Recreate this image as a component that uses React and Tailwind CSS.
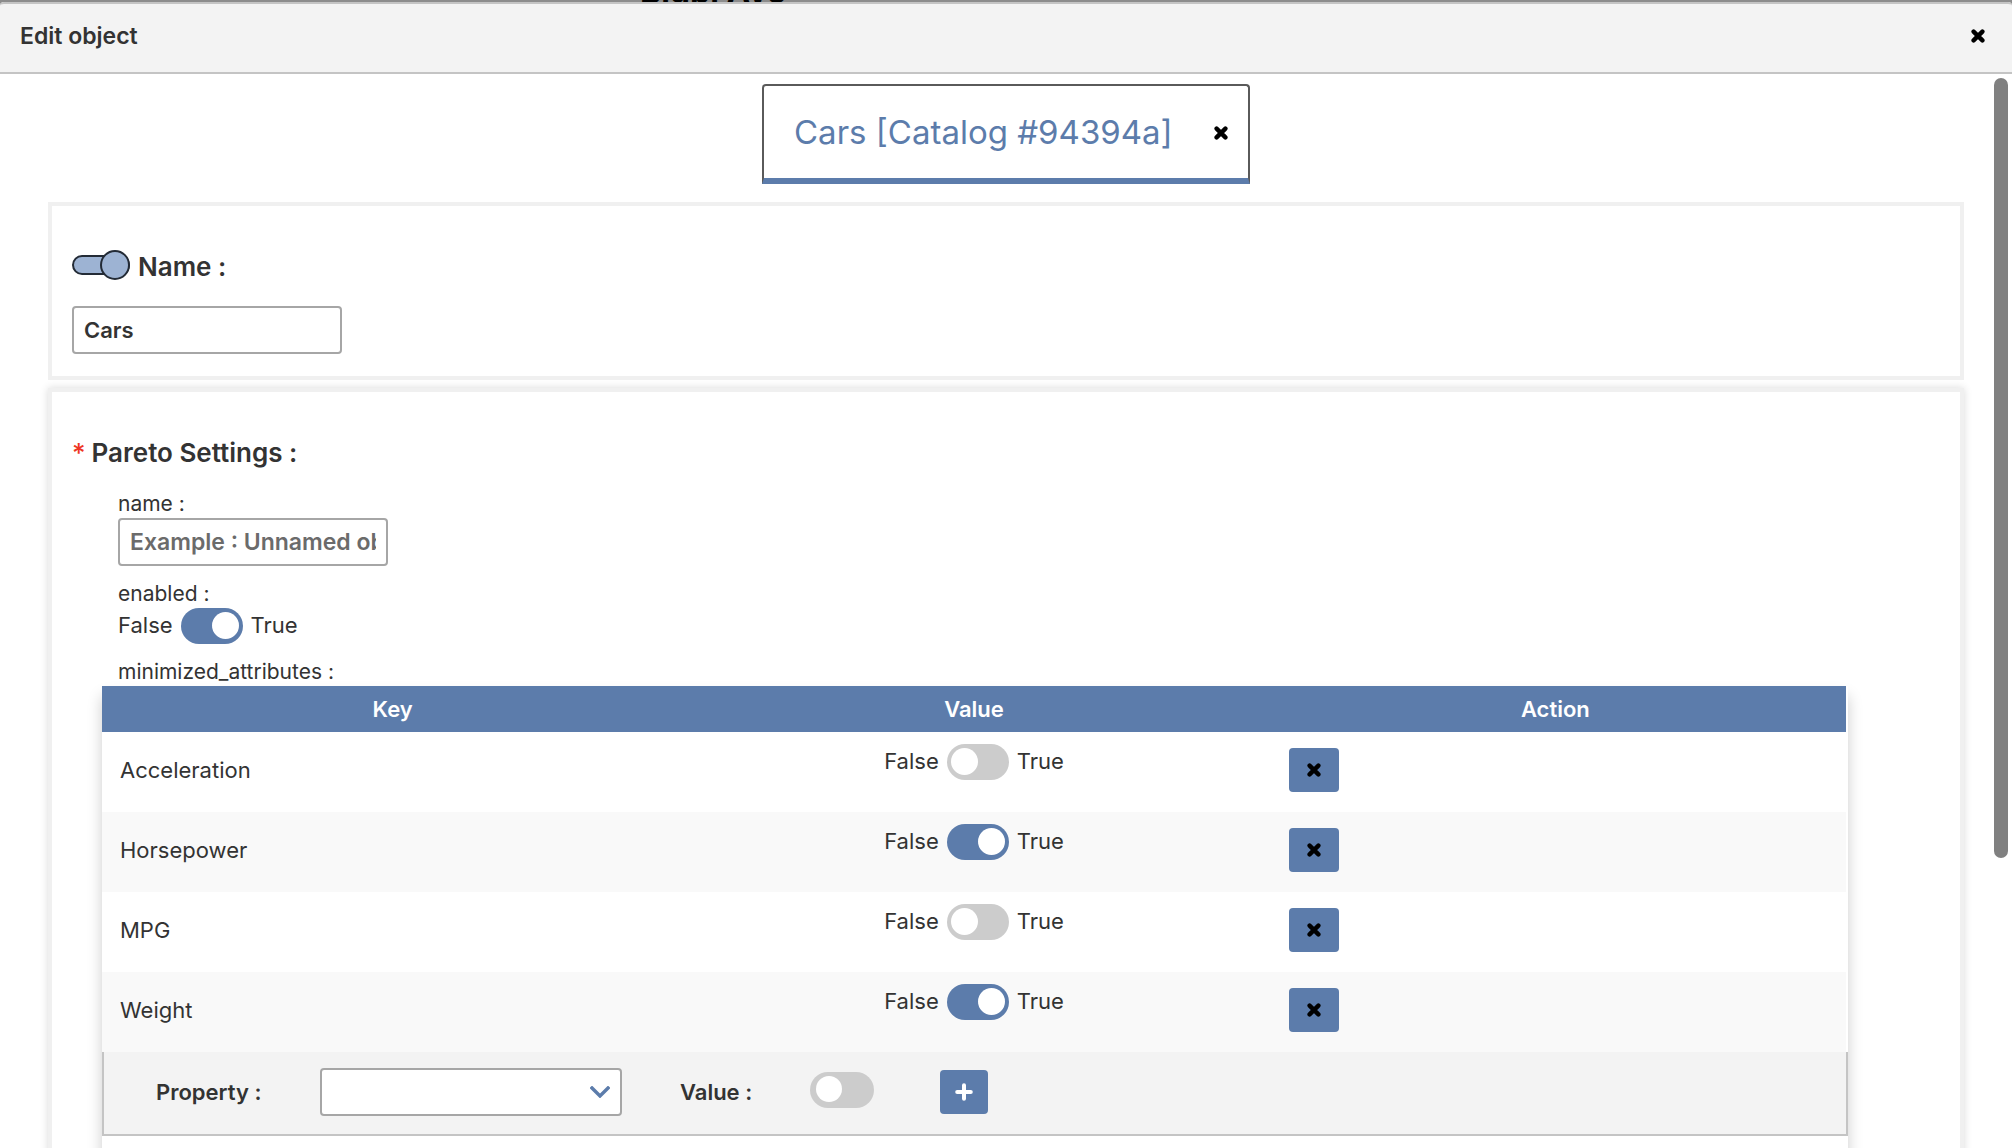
import { useState } from "react";

const ATTRIBUTES = [
  { name: "Acceleration", on: false },
  { name: "Horsepower", on: true },
  { name: "MPG", on: false },
  { name: "Weight", on: true },
];

function CrossIcon() {
  return (
    <svg className="size-[14px]" viewBox="0 0 14 14" aria-hidden="true">
      <path d="M2.6 2.6 11.4 11.4M11.4 2.6 2.6 11.4" stroke="#000" strokeWidth="4.4" strokeLinecap="round" />
    </svg>
  );
}

function Switch({ label, defaultOn = false, wide = false }) {
  const [on, setOn] = useState(defaultOn);
  return (
    <span className={wide ? "relative flex h-9 w-16 shrink-0" : "relative flex h-9 w-[62px] shrink-0"}>
      <input
        type="checkbox"
        role="switch"
        aria-label={label}
        checked={on}
        onChange={() => setOn(!on)}
        className="h-full w-full cursor-pointer appearance-none rounded-full bg-[#ccc] checked:bg-[#5c7cab]"
      />
      <span
        className={
          on
            ? "pointer-events-none absolute top-1 right-1 size-[27px] rounded-full bg-white"
            : wide
              ? "pointer-events-none absolute top-1 left-1.5 size-[26px] rounded-full bg-white"
              : "pointer-events-none absolute top-1 left-1 size-[27px] rounded-full bg-white"
        }
      />
    </span>
  );
}

function BooleanField({ label, defaultOn }) {
  return (
    <div className="flex h-9 gap-2 text-[22px] leading-[34px]">
      <span>False</span>
      <Switch label={label} defaultOn={defaultOn} />
      <span>True</span>
    </div>
  );
}

function SlimToggle({ label }) {
  const [on, setOn] = useState(true);
  return (
    <span className="relative flex h-[30px] w-[58px] items-center">
      <input
        type="checkbox"
        role="switch"
        aria-label={label}
        checked={on}
        onChange={() => setOn(!on)}
        className="h-5 w-full cursor-pointer appearance-none rounded-full border-2 border-[#232b36] bg-[#9db3d3]"
      />
      <span
        className={
          on
            ? "pointer-events-none absolute top-0 right-0 size-[30px] rounded-full border-2 border-[#232b36] bg-[#9db3d3]"
            : "pointer-events-none absolute top-0 left-0 size-[30px] rounded-full border-2 border-[#232b36] bg-[#9db3d3]"
        }
      />
    </span>
  );
}

const fieldClass =
  "block h-12 w-[270px] rounded border-2 border-[#a6a6a6] bg-white px-2.5 text-[22px] font-semibold text-[#333] placeholder:text-[23px] placeholder:text-[#6b6b6b] placeholder:opacity-100";

export default function App() {
  return (
    <div className="flex h-screen flex-col overflow-hidden bg-[#8c8c8c] font-['Inter',sans-serif] text-[22px] text-[#333]">
      <div className="h-0.5 shrink-0 overflow-hidden" aria-hidden="true">
        <div className="flex h-0.5 items-end pl-[640px] text-[32px] leading-5 font-bold text-black">Bigbl Ave</div>
      </div>

      <div role="dialog" aria-labelledby="dialog-title" className="relative flex min-h-0 grow flex-col rounded-t bg-white">
        <header className="flex h-18 shrink-0 items-center justify-between rounded-t border-y-2 border-[#c4c4c4] bg-[#f3f3f3] pr-[27px] pb-1 pl-5">
          <h1 id="dialog-title" className="text-[23px] font-semibold">Edit object</h1>
          <button type="button" aria-label="Close dialog" className="cursor-pointer">
            <CrossIcon />
          </button>
        </header>

        <main className="min-h-0 grow overflow-hidden px-12 pt-2.5">
          <div className="mx-auto flex h-[100px] w-[488px] items-center justify-between rounded-t border-2 border-b-6 border-[#5a5a5a] border-b-[#5c7cab] pt-0.5 pr-5 pl-[30px]">
            <span className="text-[33px] text-[#5c7cab]">Cars [Catalog #94394a]</span>
            <button type="button" aria-label="Close tab" className="cursor-pointer">
              <CrossIcon />
            </button>
          </div>

          <section className="mt-[18px] border-4 border-[#f0f0f0] px-5 pt-11 pb-[22px]">
            <div className="flex gap-2">
              <SlimToggle label="Use name" />
              <label htmlFor="object-name" className="text-[26px] leading-[34px] font-semibold">Name :</label>
            </div>
            <input id="object-name" type="text" defaultValue="Cars" className={"mt-[22px] " + fieldClass} />
          </section>

          <section className="mt-2 h-[900px] border-4 border-[#f0f0f0] pt-11 shadow-[0_0_8px_rgba(0,0,0,0.15)]">
            <h2 className="flex gap-1.5 pl-5 text-[26px] leading-[34px] font-semibold">
              <span className="font-medium text-[#ee3524]">*</span>
              Pareto Settings :
            </h2>

            <div className="mt-6 ml-[66px]">
              <label htmlFor="pareto-name" className="block pb-1 text-[21px] leading-5">name :</label>
              <input id="pareto-name" type="text" placeholder="Example : Unnamed object" className={fieldClass} />
              <div className="mt-[18px] pb-1 text-[21px] leading-5">enabled :</div>
              <BooleanField label="enabled" defaultOn />
              <div className="mt-[18px] pb-1 text-[21px] leading-5">minimized_attributes :</div>
            </div>

            <div className="mr-28 ml-[50px] h-[600px] shadow-[0_10px_14px_rgba(0,0,0,0.2)]">
              <div className="pr-0.5">
                <table className="w-full table-fixed border-collapse">
                  <thead className="bg-[#5c7cab] text-white">
                    <tr className="h-[46px]">
                      <th className="font-semibold">Key</th>
                      <th className="font-semibold">Value</th>
                      <th className="font-semibold">Action</th>
                    </tr>
                  </thead>
                  <tbody>
                    {ATTRIBUTES.map((a) => (
                      <tr key={a.name} className="h-20 even:bg-[#f9f9f9]">
                        <td className="pb-1 pl-[18px]">{a.name}</td>
                        <td className="pt-3 align-top">
                          <div className="flex justify-center">
                            <BooleanField label={a.name} defaultOn={a.on} />
                          </div>
                        </td>
                        <td className="pb-1 pl-6">
                          <button
                            type="button"
                            aria-label={"Remove " + a.name}
                            className="flex h-11 w-[50px] cursor-pointer items-center justify-center rounded bg-[#5c7cab]"
                          >
                            <CrossIcon />
                          </button>
                        </td>
                      </tr>
                    ))}
                  </tbody>
                </table>
              </div>

              <div className="flex h-[84px] items-center border-x-2 border-b-2 border-[#c4c4c4] bg-[#f3f3f3] pb-0.5 pl-[52px]">
                <label htmlFor="property" className="w-[164px] font-semibold">Property :</label>
                <div className="relative">
                  <select id="property" className="block h-12 w-[302px] appearance-none rounded border-2 border-[#a6a6a6] bg-white px-3">
                    <option></option>
                  </select>
                  <svg className="pointer-events-none absolute top-[18px] right-3 h-3 w-5" viewBox="0 0 20 12" fill="none" aria-hidden="true">
                    <path d="M2 2 10 10 18 2" stroke="#5c7cab" strokeWidth="3.4" strokeLinecap="square" />
                  </svg>
                </div>
                <span className="ml-[58px] w-[130px] font-semibold">Value :</span>
                <div className="pb-1">
                  <Switch label="Value" wide />
                </div>
                <button
                  type="button"
                  aria-label="Add property"
                  className="ml-[66px] flex h-11 w-12 cursor-pointer items-center justify-center rounded bg-[#5c7cab]"
                >
                  <svg className="size-[18px]" viewBox="0 0 18 18" aria-hidden="true">
                    <path d="M9 2.2V15.8M2.2 9H15.8" stroke="#fff" strokeWidth="4" strokeLinecap="round" />
                  </svg>
                </button>
              </div>
            </div>
          </section>
        </main>

        <div className="absolute top-[76px] right-1 h-[780px] w-3.5 rounded-full bg-[#808080]" />
      </div>
    </div>
  );
}
